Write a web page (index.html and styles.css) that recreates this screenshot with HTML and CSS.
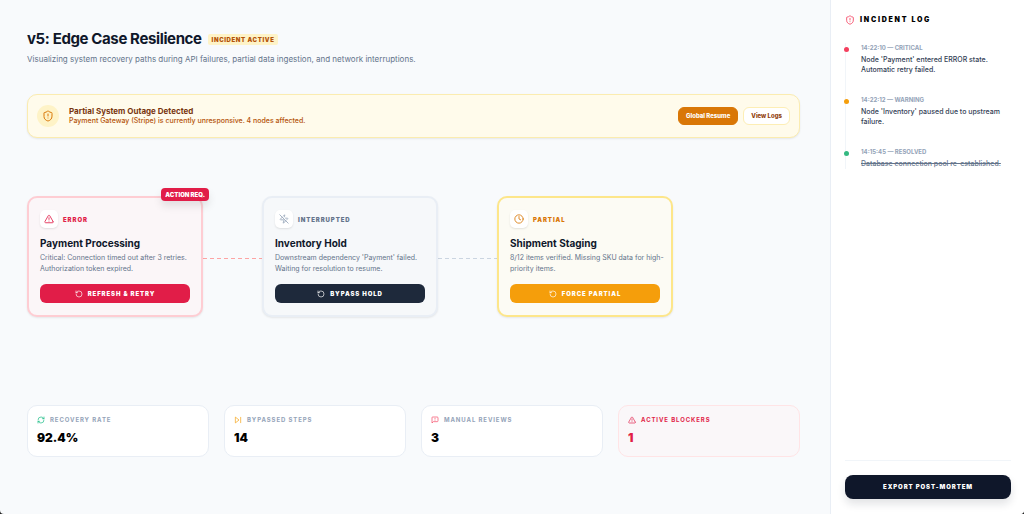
FILE: index.html
```html
<!DOCTYPE html>
<html lang="en">
<head>
  <meta charset="UTF-8" />
  <meta name="viewport" content="width=device-width, initial-scale=1.0"/>
  <title>v5: Edge Case Resilience</title>
  <link rel="stylesheet" href="styles.css">
</head>
<body>
  <!-- shared icon shapes -->
  <svg class="sprite" aria-hidden="true">
    <symbol id="shield" viewBox="0 0 24 24"><path d="M20 13c0 5-3.5 7.5-7.66 8.95a1 1 0 0 1-.67-.01C7.5 20.5 4 18 4 13V6a1 1 0 0 1 1-1c2 0 4.5-1.200 6.240-2.720a1.170 1.170 0 0 1 1.520 0C14.510 3.810 17 5 19 5a1 1 0 0 1 1 1z"/><path d="M12 8v4M12 16h.01"/></symbol>
    <symbol id="triangle" viewBox="0 0 24 24"><path d="m21.730 18-8-14a2 2 0 0 0-3.480 0l-8 14A2 2 0 0 0 4 21h16a2 2 0 0 0 1.730-3"/><path d="M12 9v4M12 17h.01"/></symbol>
    <symbol id="zap-off" viewBox="0 0 24 24"><path d="M10.513 4.856 13.120 2.170a.5.5 0 0 1 .86.46l-1.377 4.317"/><path d="M15.656 10H20a1 1 0 0 1 .78 1.630l-1.720 1.773"/><path d="M16.273 16.273 10.880 21.830a.5.5 0 0 1-.86-.46l1.920-6.020A1 1 0 0 0 11 14H4a1 1 0 0 1-.78-1.630l4.507-4.643"/><path d="m2 2 20 20"/></symbol>
    <symbol id="clock" viewBox="0 0 24 24"><circle cx="12" cy="12" r="10"/><path d="M12 6v6l4 2"/></symbol>
    <symbol id="rotate" viewBox="0 0 24 24"><path d="M3 12a9 9 0 1 0 9-9 9.750 9.750 0 0 0-6.740 2.740L3 8"/><path d="M3 3v5h5"/></symbol>
    <symbol id="refresh" viewBox="0 0 24 24"><path d="M3 12a9 9 0 0 1 9-9 9.750 9.750 0 0 1 6.740 2.740L21 8"/><path d="M21 3v5h-5"/><path d="M21 12a9 9 0 0 1-9 9 9.750 9.750 0 0 1-6.740-2.740L3 16"/><path d="M8 16H3v5"/></symbol>
    <symbol id="skip" viewBox="0 0 24 24"><path d="M5 4 15 12 5 20zM20 4v16"/></symbol>
    <symbol id="message" viewBox="0 0 24 24"><path d="M21 15a2 2 0 0 1-2 2H7l-4 4V5a2 2 0 0 1 2-2h14a2 2 0 0 1 2 2z"/><path d="M12 7v2M12 13h.01"/></symbol>
  </svg>

  <div class="app">
    <main class="main">
      <header class="header">
        <div class="title-row">
          <h1>v5: Edge Case Resilience</h1>
          <span class="tag">Incident Active</span>
        </div>
        <p class="subtitle">Visualizing system recovery paths during API failures, partial data ingestion, and network interruptions.</p>
      </header>

      <section class="banner">
        <div class="banner-icon"><svg class="icon"><use href="#shield"/></svg></div>
        <div class="banner-text">
          <h2>Partial System Outage Detected</h2>
          <p>Payment Gateway (Stripe) is currently unresponsive. 4 nodes affected.</p>
        </div>
        <div class="banner-actions">
          <button class="btn-resume">Global Resume</button>
          <button class="btn-logs">View Logs</button>
        </div>
      </section>

      <section class="flow">
        <article class="node error">
          <span class="flag">Action Req.</span>
          <div class="status"><span class="status-icon"><svg class="icon"><use href="#triangle"/></svg></span>Error</div>
          <h3>Payment Processing</h3>
          <p>Critical: Connection timed out after 3 retries. Authorization token expired.</p>
          <button><svg class="icon"><use href="#rotate"/></svg>Refresh &amp; Retry</button>
        </article>
        <div class="link link-error"></div>
        <article class="node interrupted">
          <div class="status"><span class="status-icon"><svg class="icon"><use href="#zap-off"/></svg></span>Interrupted</div>
          <h3>Inventory Hold</h3>
          <p>Downstream dependency 'Payment' failed. Waiting for resolution to resume.</p>
          <button><svg class="icon"><use href="#rotate"/></svg>Bypass Hold</button>
        </article>
        <div class="link"></div>
        <article class="node partial">
          <div class="status"><span class="status-icon"><svg class="icon"><use href="#clock"/></svg></span>Partial</div>
          <h3>Shipment Staging</h3>
          <p>8/12 items verified. Missing SKU data for high-priority items.</p>
          <button><svg class="icon"><use href="#rotate"/></svg>Force Partial</button>
        </article>
      </section>

      <section class="stats">
        <div class="stat">
          <div class="stat-label"><svg class="icon green"><use href="#refresh"/></svg>Recovery Rate</div>
          <div class="stat-value">92.4%</div>
        </div>
        <div class="stat">
          <div class="stat-label"><svg class="icon amber"><use href="#skip"/></svg>Bypassed Steps</div>
          <div class="stat-value">14</div>
        </div>
        <div class="stat">
          <div class="stat-label"><svg class="icon rose"><use href="#message"/></svg>Manual Reviews</div>
          <div class="stat-value">3</div>
        </div>
        <div class="stat blocker">
          <div class="stat-label"><svg class="icon"><use href="#triangle"/></svg>Active Blockers</div>
          <div class="stat-value">1</div>
        </div>
      </section>
    </main>

    <aside class="sidebar">
      <h2 class="log-title"><svg class="icon rose"><use href="#shield"/></svg>Incident Log</h2>
      <ul class="log">
        <li class="critical">
          <div class="time">14:22:10 — CRITICAL</div>
          <p>Node 'Payment' entered ERROR state. Automatic retry failed.</p>
        </li>
        <li class="warning">
          <div class="time">14:22:12 — WARNING</div>
          <p>Node 'Inventory' paused due to upstream failure.</p>
        </li>
        <li class="resolved">
          <div class="time">14:15:45 — RESOLVED</div>
          <p>Database connection pool re-established.</p>
        </li>
      </ul>
      <div class="sidebar-footer">
        <button class="btn-export">Export Post-Mortem</button>
      </div>
    </aside>
  </div>
</body>
</html>
```

FILE: styles.css
```css
:root {
  --ink: #0f172a;
  --muted: #64748b;
  --faint: #94a3b8;
  --line: #e9eef5;
  --rose: #e11d48;
  --amber: #f59e0b;
  --orange: #d97706;
}
* {
  box-sizing: border-box;
}
html {
  background: #222;
}
body {
  margin: 0;
  font-family: Inter, "Liberation Sans", sans-serif;
  font-size: 7px;
  color: var(--ink);
}
h1, h2, h3, p, ul {
  margin: 0;
  padding: 0;
}
button {
  font-family: inherit;
  font-size: 6px;
  cursor: pointer;
}
.sprite {
  position: absolute;
  width: 0;
  height: 0;
}
.icon {
  width: 8px;
  height: 8px;
  flex: none;
  fill: none;
  stroke: currentColor;
  stroke-width: 2;
  stroke-linecap: round;
  stroke-linejoin: round;
}
.green { color: #10b981; }
.amber { color: var(--amber); }
.rose { color: #f43f5e; }

.app {
  display: flex;
  min-height: 100vh;
  background: #f8fafc;
  border-radius: 0 0 4px 4px;
  overflow: hidden;
}
.main {
  flex: 1;
  display: flex;
  flex-direction: column;
  padding: 29px 30px 57px 27px;
}

/* header */
.header {
  margin-bottom: 28px;
}
.title-row {
  display: flex;
  align-items: center;
  gap: 6px;
}
h1 {
  font-size: 15px;
  line-height: 20px;
  font-weight: 700;
  letter-spacing: -0.025em;
}
.tag {
  padding: 2px 4px;
  border-radius: 2px;
  background: #fef3c7;
  color: #b45309;
  font-size: 6px;
  line-height: 7px;
  font-weight: 900;
  letter-spacing: 0.1em;
  text-transform: uppercase;
}
.subtitle {
  margin-top: 4px;
  font-size: 8px;
  line-height: 13px;
  color: var(--muted);
}

/* outage banner */
.banner {
  display: flex;
  align-items: center;
  gap: 10px;
  padding: 10px 9px;
  border: 1px solid #fbecb0;
  border-radius: 10px;
  background: #fffbeb;
  box-shadow: 0 1px 2px rgba(0, 0, 0, 0.08);
}
.banner-icon {
  display: flex;
  align-items: center;
  justify-content: center;
  width: 22px;
  height: 22px;
  border-radius: 50%;
  background: #fef3c7;
  color: var(--orange);
}
.banner-icon .icon {
  width: 12px;
  height: 12px;
}
.banner-text {
  flex: 1;
}
.banner-text h2 {
  font-size: 8px;
  line-height: 10px;
  font-weight: 700;
  color: #78350f;
}
.banner-text p {
  line-height: 10px;
  font-weight: 500;
  color: #b45309;
}
.banner-actions {
  display: flex;
  gap: 5px;
}
.banner-actions button {
  padding: 4px 7px;
  border: 1px solid #fdeeb5;
  border-radius: 6px;
  background: #fff;
  color: #92400e;
  line-height: 8px;
  font-weight: 800;
}
.banner-actions .btn-resume {
  border-color: var(--orange);
  background: var(--orange);
  color: #fff;
}

/* recovery nodes */
.flow {
  flex: 1;
  display: flex;
  align-items: flex-start;
  padding-top: 58px;
}
.node {
  position: relative;
  width: 176px;
  padding: 12px 11px;
  border: 2px solid var(--line);
  border-radius: 10px;
  background: #f6f8fa;
  box-shadow: 0 1px 2px rgba(0, 0, 0, 0.08);
}
.node.error {
  border-color: #fecdd3;
  background: #fbf6f8;
}
.node.partial {
  border-color: #fde68a;
  background: #fcfbf4;
}
.flag {
  position: absolute;
  top: -10px;
  right: -8px;
  padding: 3px 4px;
  border-radius: 4px;
  background: var(--rose);
  color: #fff;
  font-size: 6px;
  line-height: 7px;
  font-weight: 900;
  text-transform: uppercase;
  box-shadow: 0 5px 9px rgba(0, 0, 0, 0.1);
}
.status {
  display: flex;
  align-items: center;
  gap: 5px;
  font-size: 6px;
  font-weight: 900;
  letter-spacing: 0.15em;
  text-transform: uppercase;
  color: var(--muted);
}
.error .status { color: var(--rose); }
.partial .status { color: var(--orange); }
.status-icon {
  display: flex;
  align-items: center;
  justify-content: center;
  width: 18px;
  height: 18px;
  border-radius: 5px;
  background: #fff;
  box-shadow: 0 1px 2px rgba(0, 0, 0, 0.1);
}
.status-icon .icon {
  width: 10px;
  height: 10px;
}
.interrupted .status-icon { color: var(--faint); }
.node h3 {
  margin-top: 8px;
  font-size: 10px;
  line-height: 14px;
  font-weight: 700;
}
.node p {
  margin: 2px -8px 10px 0;
  line-height: 11px;
  color: var(--muted);
}
.node button {
  display: flex;
  align-items: center;
  justify-content: center;
  gap: 5px;
  width: 100%;
  padding: 5px;
  border: 0;
  border-radius: 6px;
  background: #1e293b;
  color: #fff;
  line-height: 9px;
  font-weight: 900;
  letter-spacing: 0.15em;
  text-transform: uppercase;
}
.node.error button { background: var(--rose); }
.node.partial button { background: var(--amber); }
.link {
  width: 59px;
  height: 1px;
  margin-top: 62px;
  background: repeating-linear-gradient(90deg, #cbd5e1 0 4px, transparent 4px 7px);
}
.link-error {
  background: repeating-linear-gradient(90deg, #fda4a4 0 4px, transparent 4px 7px);
}

/* stats */
.stats {
  display: grid;
  grid-template-columns: repeat(4, 1fr);
  gap: 15px;
}
.stat {
  padding: 9px 9px 10px;
  border: 1px solid var(--line);
  border-radius: 10px;
  background: #fff;
}
.stat-label {
  display: flex;
  align-items: center;
  gap: 5px;
  font-size: 6px;
  line-height: 9px;
  font-weight: 700;
  letter-spacing: 0.15em;
  text-transform: uppercase;
  color: var(--faint);
}
.stat-value {
  margin-top: 6px;
  font-size: 12px;
  line-height: 16px;
  font-weight: 900;
  color: #000;
}
.stat.blocker {
  border-color: #ffe4e6;
  background: #faf7f9;
}
.blocker .stat-label,
.blocker .stat-value {
  color: var(--rose);
}

/* incident log */
.sidebar {
  display: flex;
  flex-direction: column;
  width: 194px;
  padding: 15px 13px 15px 14px;
  border-left: 1px solid var(--line);
  background: #fff;
}
.log-title {
  display: flex;
  align-items: center;
  gap: 5px;
  font-size: 7px;
  line-height: 10px;
  font-weight: 900;
  letter-spacing: 0.25em;
  text-transform: uppercase;
  color: #000;
}
.log-title .icon {
  width: 10px;
  height: 10px;
}
.log {
  flex: 1;
  margin-top: 18px;
  list-style: none;
}
.log li {
  position: relative;
  padding: 0 0 20px 15px;
  border-left: 1px solid #f1f5f9;
}
.log li:last-child {
  padding-bottom: 0;
}
.log li::before {
  content: "";
  position: absolute;
  top: 4px;
  left: -2px;
  width: 5px;
  height: 5px;
  border-radius: 50%;
  background: #f43f5e;
}
.log .warning::before { background: var(--amber); }
.log .resolved::before { background: #34b981; }
.time {
  margin-bottom: 2px;
  font-size: 6px;
  line-height: 10px;
  font-weight: 700;
  color: var(--faint);
}
.log p {
  line-height: 10px;
  font-weight: 500;
  color: #334155;
}
.log .resolved p {
  color: var(--muted);
  text-decoration: line-through;
}
.sidebar-footer {
  padding-top: 14px;
  border-top: 1px solid #f1f5f9;
}
.btn-export {
  width: 100%;
  padding: 8px;
  border: 0;
  border-radius: 8px;
  background: var(--ink);
  color: #fff;
  line-height: 8px;
  font-weight: 900;
  letter-spacing: 0.15em;
  text-transform: uppercase;
  box-shadow: 0 5px 9px rgba(15, 23, 42, 0.12);
}
```
